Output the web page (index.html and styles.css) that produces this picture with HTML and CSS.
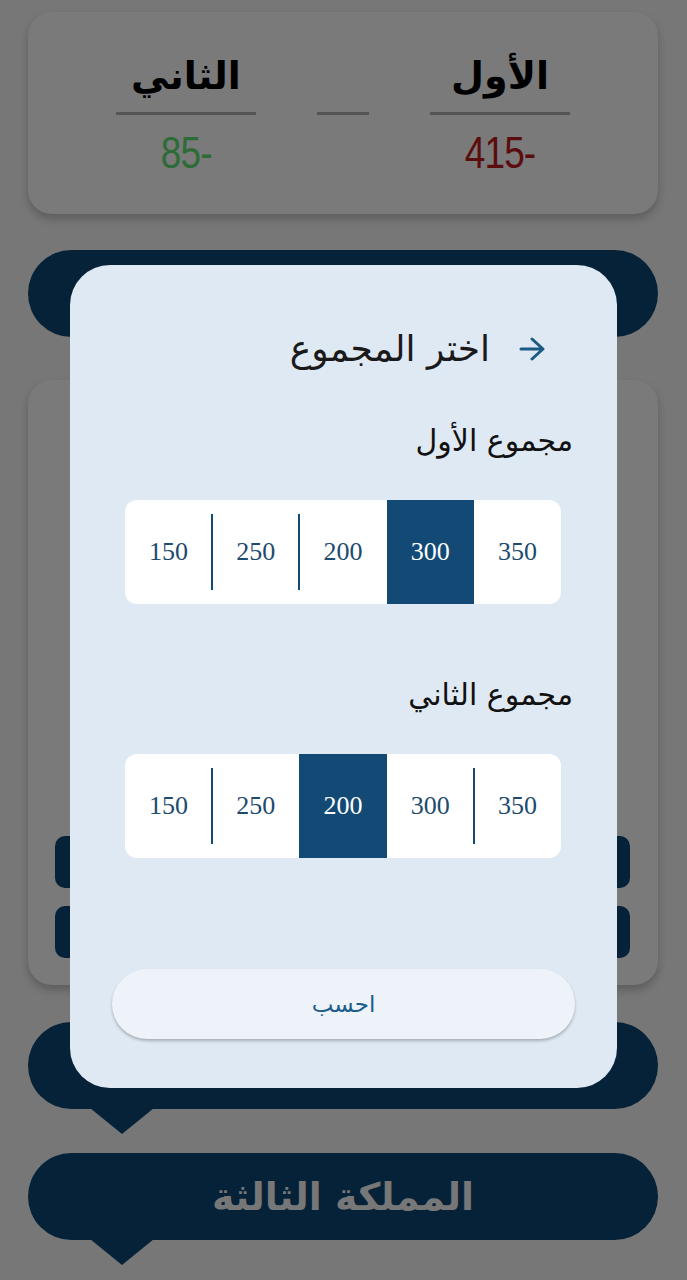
FILE: index.html
```html
<!DOCTYPE html>
<html lang="ar" dir="rtl">
<head>
<meta charset="utf-8">
<title>اختر المجموع</title>
<link rel="stylesheet" href="styles.css">
</head>
<body>
<main class="page">
  <section class="score-card">
    <div class="score-col">
      <h2 class="team">الأول</h2>
      <span class="rule"></span>
      <span class="score loss">415-</span>
    </div>
    <div class="score-col mid">
      <span class="rule short"></span>
    </div>
    <div class="score-col">
      <h2 class="team">الثاني</h2>
      <span class="rule"></span>
      <span class="score win">85-</span>
    </div>
  </section>

  <div class="pill"></div>

  <section class="rounds-card">
    <div class="bar"></div>
    <div class="bar"></div>
  </section>

  <div class="pill pointer"></div>

  <div class="pill pointer"><span class="pill-title">المملكة الثالثة</span></div>
</main>

<div class="scrim"></div>

<div class="modal" role="dialog">
  <div class="modal-head">
    <svg class="back" viewBox="0 0 32 32" width="32" height="32" aria-hidden="true">
      <path d="M5 16 H27 M16 6 L27 16 L16 26" fill="none" stroke="#1b5a85" stroke-width="3" stroke-linecap="round" stroke-linejoin="round"/>
    </svg>
    <h1 class="modal-title">اختر المجموع</h1>
  </div>

  <h3 class="label first">مجموع الأول</h3>
  <div class="segment">
    <div class="cell">350</div>
    <div class="cell selected">300</div>
    <div class="cell">200</div>
    <div class="cell sep">250</div>
    <div class="cell sep">150</div>
  </div>

  <h3 class="label">مجموع الثاني</h3>
  <div class="segment">
    <div class="cell">350</div>
    <div class="cell sep">300</div>
    <div class="cell selected">200</div>
    <div class="cell">250</div>
    <div class="cell sep">150</div>
  </div>

  <button class="calc">احسب</button>
</div>
</body>
</html>
```
FILE: styles.css
```css
* { box-sizing: border-box; }
html, body { margin: 0; padding: 0; }
body {
  background: #777777;
  font-family: "DejaVu Sans", "Noto Sans", sans-serif;
  width: 687px;
  height: 1280px;
  overflow: hidden;
}
.page {
  padding: 12px 29px 0 28px;
  display: flex;
  flex-direction: column;
}
.score-card {
  height: 202px;
  border-radius: 24px;
  background: #7a7a7a;
  box-shadow: 0 5px 8px rgba(0,0,0,0.22);
  display: flex;
  justify-content: center;
  gap: 61px;
  padding-top: 44px;
}
.score-col {
  width: 140px;
  display: flex;
  flex-direction: column;
  align-items: center;
}
.score-col.mid { width: 52px; padding-top: 56px; }
.team {
  margin: 0;
  height: 56px;
  line-height: 40px;
  font-size: 38px;
  font-weight: bold;
  color: #000;
}
.rule {
  display: block;
  width: 140px;
  height: 3px;
  background: #555555;
}
.rule.short { width: 52px; }
.score {
  margin-top: 14px;
  font-family: "Liberation Sans", sans-serif;
  font-size: 44px;
  line-height: 48px;
  letter-spacing: -1px;
  direction: ltr;
  transform: scaleX(0.84);
}
.score.loss { color: #5b0c0c; }
.score.win { color: #2d6b37; }

.pill {
  margin-top: 36px;
  height: 87px;
  border-radius: 44px;
  background: #062238;
  position: relative;
  display: flex;
  align-items: center;
  justify-content: center;
}
.pill.pointer::after {
  content: "";
  position: absolute;
  top: 86px;
  left: 62px;
  border-left: 32px solid transparent;
  border-right: 32px solid transparent;
  border-top: 26px solid #062238;
}
.pill-title {
  color: #777777;
  font-size: 38px;
  font-weight: bold;
}
.page > .pill:last-child { margin-top: 44px; }

.rounds-card {
  margin-top: 43px;
  height: 605px;
  border-radius: 24px;
  background: #7a7a7a;
  box-shadow: 0 5px 8px rgba(0,0,0,0.22);
  padding: 0 28px 27px 27px;
  display: flex;
  flex-direction: column;
  justify-content: flex-end;
  gap: 18px;
}
.bar {
  height: 52px;
  border-radius: 10px;
  background: #062238;
}
.rounds-card + .pill { margin-top: 37px; }

.scrim {
  position: fixed;
  inset: 0;
  background: transparent;
}

.modal {
  position: fixed;
  left: 70px;
  top: 265px;
  width: 547px;
  height: 823px;
  border-radius: 40px;
  background: #dfe9f3;
  padding: 0 56px 0 55px;
  display: flex;
  flex-direction: column;
}
.modal-head {
  margin-top: 62px;
  height: 44px;
  padding-right: 13px;
  display: flex;
  align-items: center;
  gap: 26px;
}
.back { flex: none; }
.modal-title {
  margin: 0;
  font-size: 36px;
  font-weight: normal;
  color: #1a1a1a;
  line-height: 44px;
}
.label {
  margin: 50px -12px 0 0;
  height: 40px;
  line-height: 40px;
  font-size: 30px;
  font-weight: normal;
  color: #111;
}
.label:not(.first) { margin-top: 71px; }
.segment {
  margin-top: 39px;
  height: 104px;
  border-radius: 12px;
  background: #ffffff;
  overflow: hidden;
  display: flex;
}
.cell {
  flex: 1;
  display: flex;
  align-items: center;
  justify-content: center;
  font-family: "Liberation Serif", serif;
  font-size: 26px;
  color: #1d4b6e;
  position: relative;
}
.cell.sep::before {
  content: "";
  position: absolute;
  right: -1px;
  top: 14px;
  bottom: 14px;
  width: 2px;
  background: #124a75;
}
.cell.selected {
  background: #124a75;
  color: #ffffff;
}
.calc {
  margin: 111px -14px 0 -13px;
  height: 70px;
  border: none;
  border-radius: 35px;
  background: #edf3f9;
  box-shadow: 0 2px 3px rgba(0,0,0,0.25);
  font-family: "DejaVu Sans", sans-serif;
  font-size: 23px;
  color: #1b5e8c;
}
```
